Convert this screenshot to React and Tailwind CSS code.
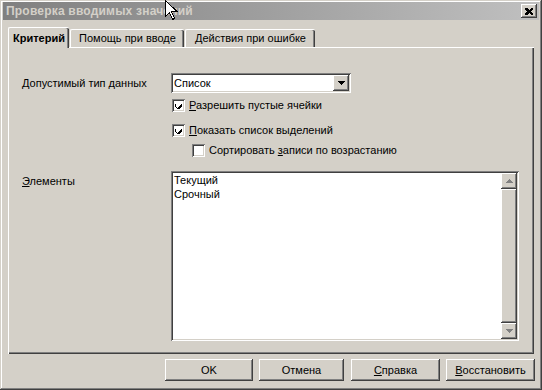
const raised = "shadow-[inset_-1px_-1px_#404040,inset_1px_1px_#ffffff,inset_-2px_-2px_#808080]";
const sunken = "shadow-[inset_1px_1px_#808080,inset_-1px_-1px_#ffffff,inset_2px_2px_#404040,inset_-2px_-2px_#d4d0c8]";

const Check = () => (
  <svg width="7" height="7" viewBox="0 0 7 7" shapeRendering="crispEdges">
    <path d="M0 2h1v3h1v1h1v-1h1v-1h1v-1h1v-1h1v3h-1v1h-1v1h-1v1h-1v-1h-1v-1h-1v-1h-1z" fill="#000" />
  </svg>
);

const Checkbox = ({ checked }) => (
  <div className={`w-[13px] h-[13px] bg-white flex items-center justify-center ${sunken}`}>
    {checked && <Check />}
  </div>
);

const Btn = ({ w, children }) => (
  <div className={`${w} h-[22px] flex items-center justify-center bg-[#d4d0c8] ${raised}`}>
    {children}
  </div>
);

const Tab = ({ active, w, children }) => (
  <div
    className={`${w} flex items-center justify-center bg-[#d4d0c8] border-l border-t border-white rounded-tl-[2px] rounded-tr-[2px] shadow-[inset_-1px_0_#404040,inset_-2px_0_#808080] ${
      active ? "h-[21px] mb-[-1px] relative z-10 font-bold" : "h-[18px]"
    }`}
  >
    {children}
  </div>
);

export default function App() {
  return (
    <div className="w-[542px] h-[390px] relative bg-[#d4d0c8] px-[3px] pt-[2px] flex flex-col text-[11px] leading-[13px] text-black font-['Liberation_Sans',Arial,sans-serif] shadow-[inset_-1px_-1px_#404040,inset_1px_1px_#d4d0c8,inset_-2px_-2px_#808080,inset_2px_2px_#ffffff]">
      {/* title bar */}
      <div className="h-[18px] bg-linear-to-r from-[#808080] to-[#c0c0c0] flex items-center justify-between pl-[3px] pr-[2px]">
        <span className="font-bold text-[12px] tracking-[0.2px] text-[#d4d0c8]">Проверка вводимых значений</span>
        <div className={`w-[16px] h-[14px] bg-[#d4d0c8] flex items-center justify-center ${raised}`}>
          <svg width="8" height="7" viewBox="0 0 8 7" shapeRendering="crispEdges">
            <path d="M0 0h2l2 2l2-2h2v1l-2 2.5l2 2.5v1h-2l-2-2l-2 2h-2v-1l2-2.5l-2-2.5z" fill="#000" />
          </svg>
        </div>
      </div>

      {/* tabs */}
      <div className="flex items-end h-[20px] mt-[7px] ml-[5px] gap-[1px]">
        <Tab active w="w-[61px]">Критерий</Tab>
        <Tab w="w-[114px]">Помощь при вводе</Tab>
        <Tab w="w-[130px]">Действия при ошибке</Tab>
      </div>

      {/* panel */}
      <div className="ml-[5px] w-[526px] h-[307px] pt-[26px] pl-[14px] shadow-[inset_1px_1px_#ffffff,inset_-1px_-1px_#404040,inset_-2px_-2px_#808080]">
        <div className="flex items-center h-[20px]">
          <div className="w-[149px]">
            <span className="underline">Д</span>опустимый тип данных
          </div>
          <div className={`w-[180px] h-[20px] bg-white p-[2px] flex items-center ${sunken}`}>
            <div className="flex-1 pl-[1px]">Список</div>
            <div className={`w-[16px] h-[16px] bg-[#d4d0c8] flex items-center justify-center ${raised}`}>
              <svg width="7" height="4" viewBox="0 0 7 4" shapeRendering="crispEdges">
                <path d="M0 0h7l-3.5 4z" fill="#000" />
              </svg>
            </div>
          </div>
        </div>

        <div className="flex items-center gap-[4px] ml-[150px] mt-[6px] h-[13px]">
          <Checkbox checked />
          <span>
            <span className="underline">Р</span>азрешить пустые ячейки
          </span>
        </div>
        <div className="flex items-center gap-[4px] ml-[150px] mt-[12px] h-[13px]">
          <Checkbox checked />
          <span>
            <span className="underline">П</span>оказать список выделений
          </span>
        </div>
        <div className="flex items-center gap-[4px] ml-[170px] mt-[7px] h-[13px]">
          <Checkbox />
          <span>
            Сортировать <span className="underline">з</span>аписи по возрастанию
          </span>
        </div>

        <div className="flex items-start mt-[14px]">
          <div className="w-[149px] pt-[4px]">
            <span className="underline">Э</span>лементы
          </div>
          <div className={`w-[348px] h-[170px] bg-white p-[2px] flex ${sunken}`}>
            <div className="flex-1 pl-[1px] leading-[14px]">
              <div>Текущий</div>
              <div>Срочный</div>
            </div>
            <div className="w-[16px] flex flex-col bg-[#d4d0c8]">
              <div className={`h-[16px] flex items-center justify-center ${raised}`}>
                <svg width="7" height="4" viewBox="0 0 7 4" shapeRendering="crispEdges">
                  <path d="M3.5 0l3.5 4h-7z" fill="#808080" />
                </svg>
              </div>
              <div className={`flex-1 ${raised}`} />
              <div className={`h-[16px] flex items-center justify-center ${raised}`}>
                <svg width="7" height="4" viewBox="0 0 7 4" shapeRendering="crispEdges">
                  <path d="M0 0h7l-3.5 4z" fill="#808080" />
                </svg>
              </div>
            </div>
          </div>
        </div>
      </div>

      {/* buttons */}
      <div className="flex justify-end mt-[5px] mr-[4px]">
        <Btn w="w-[88px]">OK</Btn>
        <div className="w-[6px]" />
        <Btn w="w-[85px]">Отмена</Btn>
        <div className="w-[7px]" />
        <Btn w="w-[89px]">
          <span>
            <span className="underline">С</span>правка
          </span>
        </Btn>
        <div className="w-[6px]" />
        <Btn w="w-[89px]">
          <span>
            <span className="underline">В</span>осстановить
          </span>
        </Btn>
      </div>

      {/* mouse pointer */}
      <svg className="absolute left-[165px] top-0" width="13" height="21" viewBox="0 0 13 21" shapeRendering="crispEdges">
        <path d="M0.5 0.5v16l4-4l3 7l2-1l-3-7h5.5z" fill="#fff" stroke="#000" />
      </svg>
    </div>
  );
}
